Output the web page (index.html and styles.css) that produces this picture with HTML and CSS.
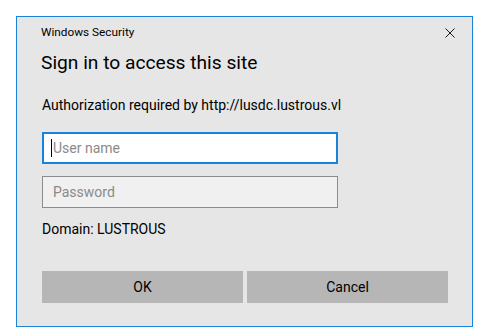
FILE: index.html
```html
<!DOCTYPE html>
<html lang="en">
<head>
    <meta charset="UTF-8">
    <title>Windows Security</title>
    <link rel="stylesheet" href="styles.css">
</head>
<body>
    <div class="dialog">
        <div class="title-bar">
            <span class="title">Windows Security</span>
            <svg class="close" width="10" height="10" viewBox="0 0 10 10">
                <path d="M0.5 0.5 L9.5 9.5 M9.5 0.5 L0.5 9.5" stroke="#1a1a1a" stroke-width="1" fill="none"/>
            </svg>
        </div>
        <h1 class="heading">Sign in to access this site</h1>
        <div class="auth">Authorization required by http://lusdc.lustrous.vl</div>
        <div class="field focused">
            <span class="caret"></span>
            <span class="placeholder">User name</span>
        </div>
        <div class="field">
            <span class="placeholder">Password</span>
        </div>
        <div class="domain">Domain: LUSTROUS</div>
        <div class="buttons">
            <button class="btn">OK</button>
            <button class="btn">Cancel</button>
        </div>
    </div>
</body>
</html>
```

FILE: styles.css
```css
body {
    margin: 0;
    padding: 16px 0 0 16px;
    background-color: #ffffff;
    font-family: Roboto, 'Noto Sans', sans-serif;
    color: #000000;
}
.dialog {
    box-sizing: border-box;
    width: 457px;
    height: 311px;
    background-color: #e6e6e6;
    border: 1px solid #1883d7;
    padding: 0 17px 0 25px;
    display: flex;
    flex-direction: column;
}
.title-bar {
    display: flex;
    justify-content: space-between;
    align-items: center;
    margin-top: 7px;
    height: 16px;
    margin-left: -1px;
}
.title {
    font-size: 11.8px;
    line-height: 16px;
}
.close {
    display: block;
    margin-top: 2px;
}
.heading {
    margin: 9px 0 0 -1px;
    font-size: 19.2px;
    line-height: 28px;
    font-weight: normal;
}
.auth {
    margin-top: 18px;
    font-size: 14px;
    line-height: 20px;
}
.field {
    box-sizing: border-box;
    width: 296px;
    height: 32px;
    margin-top: 12px;
    border: 1px solid #8c8c8c;
    background-color: #f0f0f0;
    display: flex;
    align-items: center;
    padding-left: 10px;
    font-size: 14px;
}
.field.focused {
    margin-top: 17px;
    border: 2px solid #1883d7;
    background-color: #ffffff;
    padding-left: 7px;
}
.caret {
    width: 1px;
    height: 18px;
    background-color: #000000;
    margin-right: 1px;
}
.placeholder {
    color: #8a8a8a;
}
.domain {
    margin-top: 11px;
    font-size: 14px;
    line-height: 20px;
}
.buttons {
    margin-top: 32px;
    display: flex;
    gap: 4px;
}
.btn {
    width: 201px;
    height: 32px;
    border: none;
    background-color: #b6b6b6;
    font-family: Roboto, 'Noto Sans', sans-serif;
    font-size: 14px;
    color: #000000;
    padding: 0;
}
```
